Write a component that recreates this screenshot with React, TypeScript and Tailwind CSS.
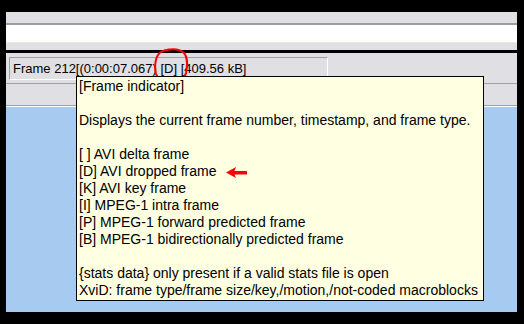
import React from "react";

const Lines = [
  "[Frame indicator]",
  "",
  "Displays the current frame number, timestamp, and frame type.",
  "",
  "[ ] AVI delta frame",
  "[D] AVI dropped frame",
  "[K] AVI key frame",
  "[I] MPEG-1 intra frame",
  "[P] MPEG-1 forward predicted frame",
  "[B] MPEG-1 bidirectionally predicted frame",
  "",
  "{stats data} only present if a valid stats file is open",
  "XviD: frame type/frame size/key,/motion,/not-coded macroblocks",
];

function RedArrow() {
  return (
    <svg width="22" height="11" viewBox="0 0 22 11" className="inline-block ml-[10px] align-middle">
      <path d="M0 5.5 L10 0 L8.5 4 L21 4 L21 7.5 L8.5 7.5 L10 11 Z" fill="#ff0000" />
    </svg>
  );
}

function RedCircle() {
  return (
    <svg
      width="36"
      height="36"
      viewBox="0 0 36 36"
      className="absolute left-[-7px] top-[-13px] pointer-events-none"
    >
      <path
        d="M14 2 C20 0.8 27 1.5 31 5 C34.5 9 34.5 18 33 25 C31.5 31 27 34 18 34 C10 34 5 32 3 26 C1.5 20 2 11 5 7 C7 3.5 11 2 16 1.5"
        fill="none"
        stroke="#ff0000"
        strokeWidth="2"
        strokeLinecap="round"
      />
    </svg>
  );
}

export default function App() {
  return (
    <div
      className="relative w-[524px] h-[324px] bg-black pl-[6px] pr-[7px] pt-[12px] pb-[12px]"
      style={{ fontFamily: '"Liberation Sans", Arial, sans-serif' }}
    >
      <div className="flex flex-col h-full">
        <div className="h-[11px] bg-[#e0dfe3]"></div>
        <div className="h-[2px] bg-[#9d9da1]"></div>
        <div className="h-[17px] bg-white"></div>
        <div className="h-[1px] bg-[#ece9d8]"></div>
        <div className="h-[7px] bg-[#e0dfe3]"></div>
        <div className="h-[3px] bg-black"></div>
        <div className="h-[30px] bg-[#e0dfe3] pt-[4px] pl-[3px] flex">
          <div className="w-[319px] h-[23px] border-t border-l border-[#a0a0a4] border-b border-r border-b-white border-r-white flex items-center pl-[3px] text-[13px] text-black whitespace-nowrap">
            <span>
              Frame 212[(0:00:07.067){" "}
              <span className="relative">
                [D]
                <RedCircle />
              </span>{" "}
              [409.56 kB]
            </span>
          </div>
        </div>
        <div className="h-[1px] bg-[#a0a0a4]"></div>
        <div className="h-[21px] bg-[#e0dfe3]"></div>
        <div className="h-[1px] bg-[#9d9da1]"></div>
        <div className="h-[1px] bg-white"></div>
        <div className="flex-1 bg-[#a6caf0]"></div>
      </div>

      <div className="absolute left-[76px] top-[76px] w-[408px] h-[225px] border border-black bg-[#ffffe1] pl-[2px] pt-[1px] text-[14px] leading-[17px] text-black whitespace-nowrap">
        {Lines.map((line, index) => {
          return (
            <div key={index} className="h-[17px]">
              {line}
              {index === 5 ? <RedArrow /> : ""}
            </div>
          );
        })}
      </div>
    </div>
  );
}
